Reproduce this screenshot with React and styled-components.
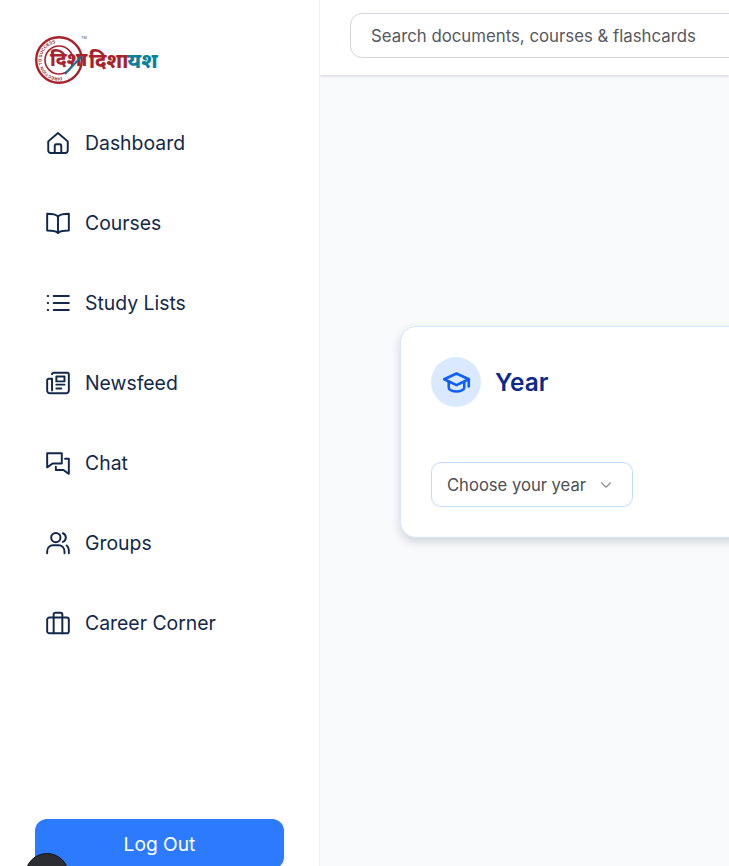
import React from "react";
import styled, { createGlobalStyle } from "styled-components";
import { ChevronDown } from "lucide-react";

const GlobalStyle = createGlobalStyle`
    html, body {
        margin: 0;
        padding: 0;
        height: 100%;
        overflow: hidden;
    }
    body {
        font-family: "Inter", "Noto Sans", sans-serif;
        background: #fff;
    }
`

const Page = styled.div`
    display: flex;
    width: 729px;
    height: 866px;
    overflow: hidden;
    position: relative;
`

const Sidebar = styled.aside`
    width: 320px;
    flex-shrink: 0;
    background: #fff;
    border-right: 1px solid #eceef2;
    box-sizing: border-box;
    padding: 30px 35px 0;
    display: flex;
    flex-direction: column;
    position: relative;
`

const Logo = styled.svg`
    width: 128px;
    height: 64px;
    margin-left: -3px;
    display: block;
`

const Nav = styled.nav`
    display: flex;
    flex-direction: column;
    margin-top: 9px;
`

const NavRow = styled.a`
    height: 80px;
    display: flex;
    align-items: center;
    gap: 14px;
    padding-left: 10px;
    color: #12284b;
    font-size: 19.4px;
    svg {
        width: 26px;
        height: 26px;
        flex-shrink: 0;
        fill: none;
        stroke: #12284b;
        stroke-width: 1.8;
        stroke-linecap: round;
        stroke-linejoin: round;
    }
`

const LogoutButton = styled.button`
    position: absolute;
    left: 35px;
    top: 819px;
    width: 249px;
    height: 50px;
    border: none;
    border-radius: 12px;
    background: #2c7bff;
    color: #fff;
    font-family: inherit;
    font-size: 19.2px;
`

const HelpBubble = styled.div`
    position: absolute;
    left: 25px;
    top: 853px;
    width: 44px;
    height: 44px;
    border-radius: 50%;
    background: #2b2d33;
    border: 1px solid #111;
    box-sizing: border-box;
`

const Main = styled.main`
    flex: 1;
    min-width: 0;
    background: #f9fafc;
    display: flex;
    flex-direction: column;
`

const Topbar = styled.header`
    height: 75px;
    flex-shrink: 0;
    background: #fff;
    box-sizing: border-box;
    padding: 13px 0 0 30px;
    box-shadow: 0 1px 3px rgba(30, 40, 60, 0.2);
`

const SearchBox = styled.div`
    width: 520px;
    height: 45px;
    border: 1px solid #d3d6de;
    border-radius: 12px;
    box-sizing: border-box;
    padding-left: 20px;
    display: flex;
    align-items: center;
    color: #55585f;
    font-size: 16.8px;
    white-space: nowrap;
`

const Content = styled.div`
    padding: 251px 0 0 80px;
`

const Card = styled.section`
    width: 480px;
    height: 212px;
    box-sizing: border-box;
    background: #fff;
    border: 1px solid #d9e7fc;
    border-radius: 16px;
    padding: 30px;
    box-shadow: 0 4px 10px rgba(30, 40, 60, 0.18);
`

const CardHead = styled.div`
    display: flex;
    align-items: center;
    gap: 14px;
`

const IconCircle = styled.div`
    width: 50px;
    height: 50px;
    border-radius: 50%;
    background: #dbe9fe;
    display: flex;
    align-items: center;
    justify-content: center;
    svg {
        width: 31px;
        height: 31px;
        fill: none;
        stroke: #0f5fff;
        stroke-width: 2;
        stroke-linecap: round;
        stroke-linejoin: round;
    }
`

const CardTitle = styled.h2`
    margin: 0;
    font-size: 24.4px;
    font-weight: 600;
    color: #0b2a8a;
`

const YearSelect = styled.div`
    margin-top: 55px;
    width: 202px;
    height: 45px;
    box-sizing: border-box;
    border: 1px solid #bfdbfe;
    border-radius: 10px;
    padding: 0 17px 0 15px;
    display: flex;
    align-items: center;
    justify-content: space-between;
    color: #4d4f55;
    font-size: 16.6px;
    white-space: nowrap;
    svg {
        color: #8b8d93;
        flex-shrink: 0;
    }
`

const navItems = [
    { label: "Dashboard", icon: <><path d="M3 10.500 12 2.800l9 7.700V19a2.200 2.200 0 0 1-2.200 2.200H5.200A2.200 2.200 0 0 1 3 19z" /><path d="M9 21v-6.500a1.300 1.300 0 0 1 1.300-1.300h3.400a1.300 1.300 0 0 1 1.300 1.300V21" /></> },
    { label: "Courses", icon: <><path d="M12 6C10.500 4.500 8.500 3.500 2 3.500V19c5.500 0 8.500.5 10 2.300C13.500 19.500 16.500 19 22 19V3.500C15.500 3.500 13.500 4.500 12 6z" /><path d="M12 6v15" /></> },
    { label: "Study Lists", icon: <><path d="M8 5.500h14M8 12h14M8 18.500h14" /><path d="M2.500 5.500h.5M2.500 12h.5M2.500 18.500h.5" /></> },
    { label: "Newsfeed", icon: <><path d="M6.500 4A1.500 1.500 0 0 1 8 2.500h12.500A1.500 1.500 0 0 1 22 4v15a2.500 2.500 0 0 1-2.500 2.500H4.500A2.500 2.500 0 0 1 2 19V9.500A1.500 1.500 0 0 1 3.500 8h3v11" /><path d="M10.500 6h7.500v4.500h-7.500zM10.500 13.500H18M10.500 17H15" /></> },
    { label: "Chat", icon: <><path d="M2 3h13.500v9.500H7l-5 3.500z" /><path d="M18.500 8H22v14l-5-3.500H10v-3" /></> },
    { label: "Groups", icon: <><circle cx="10" cy="7" r="4.300" /><path d="M2 21.500v-2A5.500 5.500 0 0 1 7.500 14h5a5.500 5.500 0 0 1 5.500 5.500v2" /><path d="M16.500 3a4.300 4.300 0 0 1 0 8M20 14.300a5.500 5.500 0 0 1 2 4.200v3" /></> },
    { label: "Career Corner", icon: <><rect x="2" y="7" width="20" height="14.500" rx="2" /><path d="M8 7V4a1.500 1.500 0 0 1 1.500-1.500h5A1.500 1.500 0 0 1 16 4v3M8 7v14.500M16 7v14.500" /></> },
]

const App = () => {
    return (
        <Page>
            <GlobalStyle />
            <Sidebar>
                <Logo viewBox="0 0 128 64">
                    <defs>
                        <path id="ring-text" d="M 30 47.300 A 17.500 17.500 0 1 1 36 15" />
                    </defs>
                    <circle cx="27" cy="30" r="22.800" fill="#fff" stroke="#a8222c" strokeWidth="2.400" />
                    <circle cx="27" cy="30" r="14" fill="#fff" stroke="#a8222c" strokeWidth="1.600" />
                    <text fontFamily="Liberation Sans, sans-serif" fontSize="4.400" fontWeight="700" fill="#8c1d26">
                        <textPath href="#ring-text">DIRECTION TO SUCCESS</textPath>
                    </text>
                    <text x="18" y="36" fontFamily="Noto Sans, sans-serif" fontSize="19" fontWeight="800" fill="#a8222c">दिशा</text>
                    <path d="M33 44 50 26" stroke="#1b6f92" strokeWidth="2" />
                    <text x="57" y="38" fontFamily="Noto Sans, sans-serif" fontSize="20" fontWeight="800" fill="#a8222c">दिशा</text>
                    <text x="95.500" y="38" fontFamily="Noto Sans, sans-serif" fontSize="21" fontWeight="800" fill="#0e7f9c">यश</text>
                    <text x="49" y="9" fontFamily="Liberation Sans, sans-serif" fontSize="4" fill="#444">TM</text>
                </Logo>
                <Nav>
                    {navItems.map((item) => (
                        <NavRow key={item.label}>
                            <svg viewBox="0 0 24 24">{item.icon}</svg>
                            {item.label}
                        </NavRow>
                    ))}
                </Nav>
                <LogoutButton>Log Out</LogoutButton>
                <HelpBubble />
            </Sidebar>
            <Main>
                <Topbar>
                    <SearchBox>Search documents, courses &amp; flashcards</SearchBox>
                </Topbar>
                <Content>
                    <Card>
                        <CardHead>
                            <IconCircle>
                                <svg viewBox="0 0 24 24">
                                    <path d="M12 5 2.500 9.500 12 14l9.500-4.500z" />
                                    <path d="M6 11.500V16c0 1.500 3 3 6 3s6-1.500 6-3v-4.500" />
                                    <path d="M21.500 9.500V15" />
                                </svg>
                            </IconCircle>
                            <CardTitle>Year</CardTitle>
                        </CardHead>
                        <YearSelect>
                            Choose your year
                            <ChevronDown size={18} strokeWidth={1.5} />
                        </YearSelect>
                    </Card>
                </Content>
            </Main>
        </Page>
    )
}

export default App
